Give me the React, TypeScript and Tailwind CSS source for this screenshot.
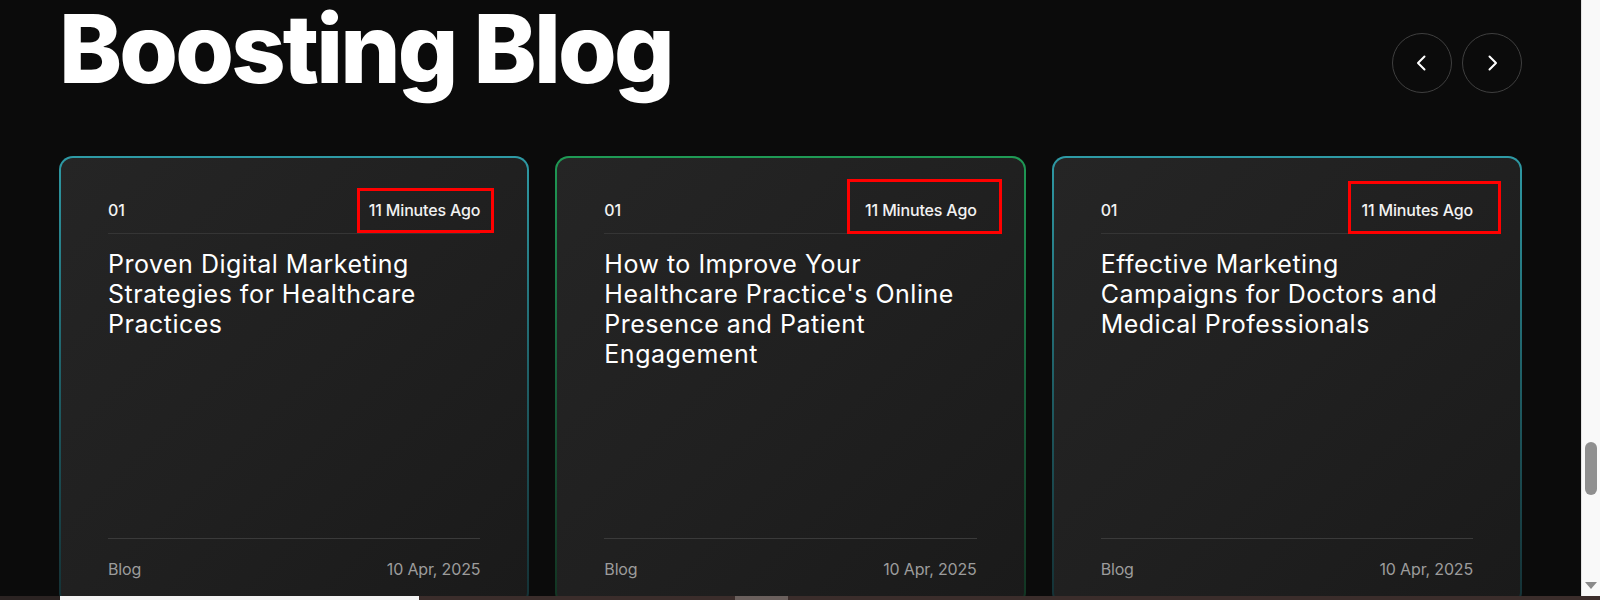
type Post = {
  num: string
  ago: string
  lines: string[]
  tag: string
  date: string
  border: string
  mark: string
}

const posts: Post[] = [
  {
    num: "01",
    ago: "11 Minutes Ago",
    lines: ["Proven Digital Marketing", "Strategies for Healthcare", "Practices"],
    tag: "Blog",
    date: "10 Apr, 2025",
    border: "bg-gradient-to-b from-[#2e9aa5] via-[#1f5f66] to-[#143034]",
    mark: "left-[298px] top-[32px] w-[137px] h-[45px]",
  },
  {
    num: "01",
    ago: "11 Minutes Ago",
    lines: ["How to Improve Your", "Healthcare Practice's Online", "Presence and Patient", "Engagement"],
    tag: "Blog",
    date: "10 Apr, 2025",
    border: "bg-gradient-to-b from-[#1f9a55] via-[#17603a] to-[#123322]",
    mark: "left-[292px] top-[23px] w-[155px] h-[55px]",
  },
  {
    num: "01",
    ago: "11 Minutes Ago",
    lines: ["Effective Marketing", "Campaigns for Doctors and", "Medical Professionals"],
    tag: "Blog",
    date: "10 Apr, 2025",
    border: "bg-gradient-to-b from-[#2e9aa5] via-[#1f5f66] to-[#143034]",
    mark: "left-[296px] top-[25px] w-[153px] h-[53px]",
  },
]

function Chevron({ dir }: { dir: "left" | "right" }) {
  return (
    <svg width="20" height="20" viewBox="0 0 20 20" fill="none" stroke="white" strokeWidth="2" strokeLinecap="round" strokeLinejoin="round">
      {dir === "left" ? <path d="M12.5 3.5 6 10l6.5 6.5" /> : <path d="M7.5 3.5 14 10l-6.5 6.5" />}
    </svg>
  )
}

function BlogCard({ post }: { post: Post }) {
  return (
    <div className={`relative h-[450px] rounded-[14px] p-[2px] ${post.border}`}>
      <div className="flex h-full flex-col rounded-[12px] bg-gradient-to-br from-[#252525] via-[#202020] to-[#1a1a1a] px-[47px] pt-[40px]">
        <div className="flex items-center justify-between border-b border-[#353535] pb-[11px] text-[16px] leading-6 font-medium tracking-[-0.01em] text-[#f2f2f2]">
          <span>{post.num}</span>
          <span>{post.ago}</span>
        </div>
        <h3 className="mt-[15px] text-[25px] leading-[30px] font-normal tracking-[0.02em] text-white">
          {post.lines.map((l, i) => (
            <span key={i} className="block whitespace-nowrap">
              {l}
            </span>
          ))}
        </h3>
        <div className="mt-auto mb-[23px] flex items-center justify-between border-t border-[#3a3a3a] pt-[18px] text-[16px] leading-6 tracking-[-0.01em] text-[#9c9c9c]">
          <span>{post.tag}</span>
          <span>{post.date}</span>
        </div>
      </div>
      <div className={`absolute border-[3px] border-[#ff0000] ${post.mark}`} />
    </div>
  )
}

export default function App() {
  return (
    <div className="flex h-[600px] w-full flex-col overflow-hidden bg-[#0b0b0b] font-['Inter',sans-serif]">
      <div className="flex h-[596px] overflow-hidden">
        <div className="flex-1 px-[59px]">
          <div className="flex items-start justify-between">
            <h1 className="text-[95px] leading-[1.04] font-extrabold tracking-[-0.03em] text-white">Boosting Blog</h1>
            <div className="mt-[33px] flex gap-[10px]">
              <button className="flex h-[60px] w-[60px] items-center justify-center rounded-full border-[1.5px] border-[#3f3f3f]">
                <Chevron dir="left" />
              </button>
              <button className="flex h-[60px] w-[60px] items-center justify-center rounded-full border-[1.5px] border-[#3f3f3f]">
                <Chevron dir="right" />
              </button>
            </div>
          </div>
          <div className="mt-[57px] grid grid-cols-3 gap-[26px]">
            {posts.map((p, i) => (
              <BlogCard key={i} post={p} />
            ))}
          </div>
        </div>
        <div className="relative w-[19px] border-l border-[#e2e2e2] bg-[#f9f9f9]">
          <div className="absolute left-[3px] top-[442px] h-[53px] w-[12px] rounded-full bg-[#8f8f8f]" />
          <div className="absolute left-[3px] top-[582px] h-0 w-0 border-x-[6px] border-t-[7px] border-x-transparent border-t-[#8a8a8a]" />
        </div>
      </div>
      <div className="flex h-[4px]">
        <div className="w-[60px] bg-[#2b2322]" />
        <div className="w-[359px] bg-[#f4f4f4]" />
        <div className="w-[316px] bg-[#3b2d2b]" />
        <div className="w-[53px] bg-[#6b605d]" />
        <div className="flex-1 bg-[#3b2d2b]" />
      </div>
    </div>
  )
}
